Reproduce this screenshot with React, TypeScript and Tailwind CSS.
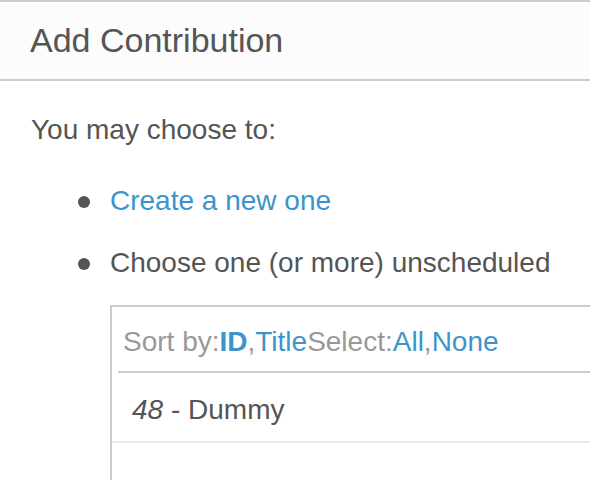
const BLUE = 'text-[#3c94cb]';

function Bullet() {
  return (
    <span className="w-[33px] shrink-0">
      <span className="block w-[12px] h-[12px] mt-[15px] ml-[1px] rounded-full bg-[#555]" />
    </span>
  );
}

export default function App() {
  return (
    <div className="w-[590px] h-[480px] overflow-hidden bg-white text-[#555] text-[28px] leading-[40px] font-['Liberation_Sans',Arial,sans-serif]">
      {/* Header */}
      <div className="border-y-2 border-[#cccccc] bg-[#fcfcfc] pl-[30px] pt-[18px] pb-[19px]">
        <h2 className="text-[34px] leading-[40px] font-normal">Add Contribution</h2>
      </div>

      {/* Body */}
      <div className="pl-[30px] pt-[29px]">
        <p className="pl-px">You may choose to:</p>

        <ul className="pl-[47px] mt-[31px] flex flex-col gap-[22px]">
          <li className="flex">
            <Bullet />
            <a className={`${BLUE} cursor-pointer`}>Create a new one</a>
          </li>
          <li className="flex">
            <Bullet />
            <div className="flex-1 min-w-0">
              <div>Choose one (or more) unscheduled</div>

              {/* Unscheduled list */}
              <div className="mt-[22px] w-[640px] h-[200px] border-2 border-[#cccccc]">
                <div className="ml-[6px] pl-[5px] pt-[15px] pb-[9px] border-b-2 border-[#cccccc] text-[#999]">
                  <span>Sort by:</span>
                  <a className={`${BLUE} font-bold`}>ID</a>
                  <span>,</span>
                  <a className={BLUE}>Title</a>
                  <span>Select:</span>
                  <a className={BLUE}>All</a>
                  <span>,</span>
                  <a className={BLUE}>None</a>
                </div>
                <div className="pl-[20px] pt-[17px] pb-[11px] border-b-2 border-[#ebebeb] text-[#555]">
                  <i>48</i> - Dummy
                </div>
              </div>
            </div>
          </li>
        </ul>
      </div>
    </div>
  );
}
